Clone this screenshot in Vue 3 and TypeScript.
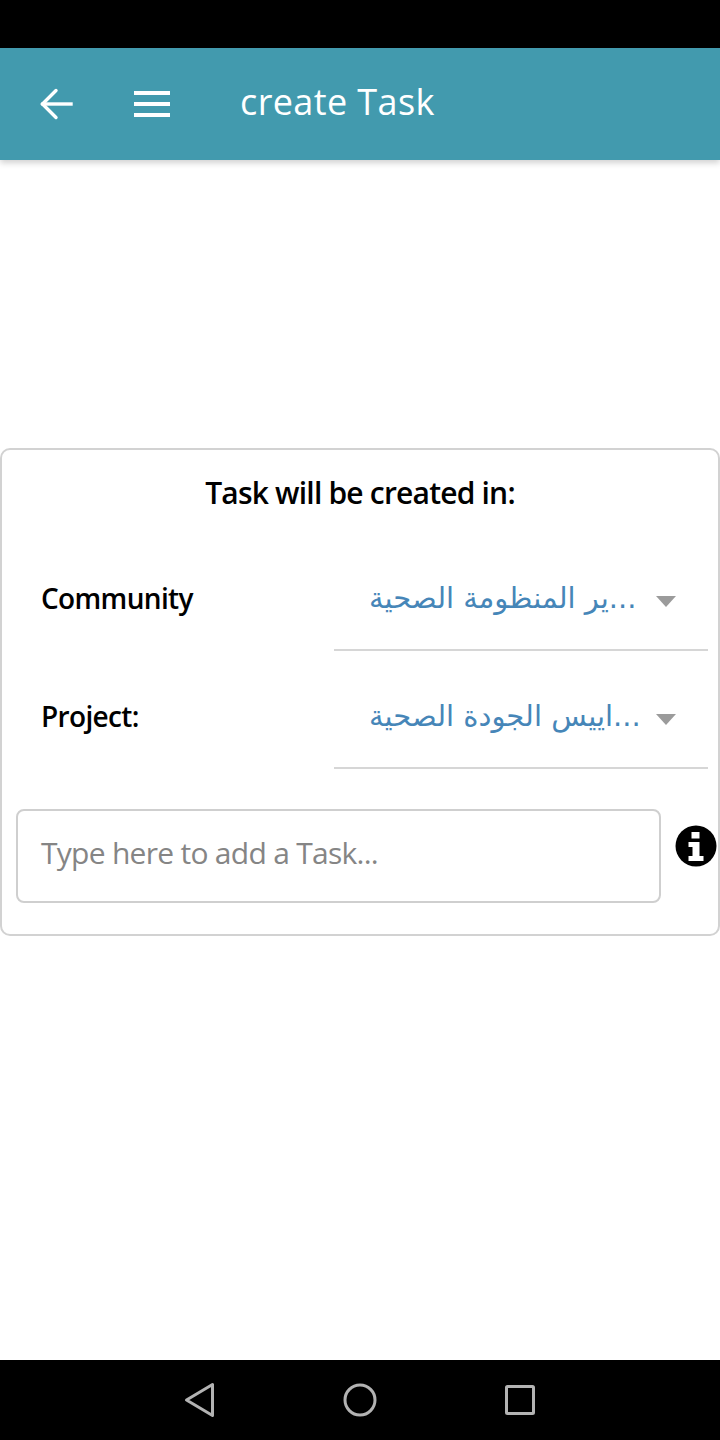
<script setup lang="ts">
const rows = [
  { label: 'Community', value: '...ير المنظومة الصحية', cls: 'community' },
  { label: 'Project:', value: '...اييس الجودة الصحية', cls: 'project' },
]
</script>

<template>
  <div class="screen">
    <div class="status"></div>
    <header class="bar">
      <svg class="back" width="36" height="36" viewBox="0 0 36 36" fill="none" stroke="#fff" stroke-width="3.4" stroke-linecap="square">
        <path d="M33 18H5" />
        <path d="M18 4.5 4.5 18 18 31.5" stroke-linecap="round" />
      </svg>
      <div class="menu"><i></i><i></i><i></i></div>
      <h1>create Task</h1>
    </header>
    <main class="main">
      <section class="card">
        <h2>Task will be created in:</h2>
        <div v-for="r in rows" :key="r.label" class="row" :class="r.cls">
          <span class="label">{{ r.label }}</span>
          <div class="select">
            <span class="value" dir="rtl">{{ r.value }}</span>
            <span class="caret"></span>
          </div>
        </div>
        <div class="input-row">
          <div class="input">Type here to add a Task...</div>
          <svg class="info" width="42" height="42" viewBox="0 0 42 42">
            <ellipse cx="21" cy="21" rx="20.5" ry="20.5" fill="#000" />
            <rect x="16.5" y="7" width="8" height="6.5" fill="#fff" />
            <path d="M13.5 17h11v14h4v5h-15v-5h4v-9h-4z" fill="#fff" />
          </svg>
        </div>
      </section>
    </main>
    <nav class="nav">
      <svg width="32" height="36" viewBox="0 0 32 36" fill="none" stroke="#b3b3b3" stroke-width="3" stroke-linejoin="round">
        <path d="M28.5 2.5v31L2.5 18z" />
      </svg>
      <svg width="34" height="34" viewBox="0 0 34 34" fill="none" stroke="#b3b3b3" stroke-width="3">
        <circle cx="17" cy="17" r="15" />
      </svg>
      <svg width="30" height="30" viewBox="0 0 30 30" fill="none" stroke="#b3b3b3" stroke-width="3" stroke-linejoin="round">
        <rect x="1.5" y="1.5" width="27" height="27" rx="1" />
      </svg>
    </nav>
  </div>
</template>

<style>
html, body { margin: 0; background: #fff; }
</style>

<style scoped>
.screen {
  width: 720px;
  height: 1440px;
  display: flex;
  flex-direction: column;
  background: #fff;
  font-family: "Open Sans", "DejaVu Sans", sans-serif;
  overflow: hidden;
}
.status { height: 48px; background: #000; flex: none; }
.bar {
  height: 112px;
  flex: none;
  display: flex;
  align-items: center;
  background: #429aae;
  box-shadow: 0 3px 6px rgba(0, 0, 0, 0.18);
  color: #fff;
  position: relative;
}
.back { margin-left: 38px; flex: none; }
.menu {
  margin-left: 60px;
  width: 36px;
  height: 26px;
  display: flex;
  flex-direction: column;
  justify-content: space-between;
  flex: none;
}
.menu i { display: block; height: 4px; background: #fff; }
.bar h1 {
  margin: -4px 0 0 70px;
  font-size: 36px;
  font-weight: 400;
  letter-spacing: 0.4px;
  line-height: 48px;
  white-space: nowrap;
}
.main { flex: 1; padding-top: 288px; }
.card {
  box-sizing: border-box;
  height: 488px;
  border: 2px solid #d2d2d2;
  border-radius: 10px;
  position: relative;
}
.card h2 {
  margin: 0;
  padding-top: 22px;
  height: 42px;
  line-height: 42px;
  text-align: center;
  font-size: 30px;
  font-weight: 600;
  letter-spacing: -0.8px;
  color: #000;
}
.row { display: flex; height: 118px; }
.community { margin-top: 19px; }
.label {
  margin: 45px 0 0 39px;
  width: 293px;
  height: 40px;
  flex: none;
  font-size: 28px;
  line-height: 40px;
  font-weight: 600;
  letter-spacing: -0.65px;
  color: #000;
}
.select {
  width: 374px;
  height: 118px;
  box-sizing: border-box;
  border-bottom: 2px solid #d6d6d6;
  display: flex;
  align-items: flex-start;
  justify-content: space-between;
  padding: 45px 32px 0 35px;
}
.value {
  font-family: "DejaVu Sans", sans-serif;
  font-size: 29px;
  line-height: 40px;
  color: #4686b8;
  white-space: nowrap;
}
.caret {
  width: 0;
  height: 0;
  margin: 18px 0 0 0;
  border-left: 10px solid transparent;
  border-right: 10px solid transparent;
  border-top: 11px solid #9b9b9b;
  flex: none;
}
.input-row {
  display: flex;
  margin-top: 40px;
  padding-left: 14px;
  align-items: flex-start;
}
.input {
  box-sizing: border-box;
  width: 645px;
  height: 94px;
  border: 2px solid #cfcfcf;
  border-radius: 8px;
  padding: 0 0 8px 23px;
  display: flex;
  align-items: center;
  font-size: 30px;
  letter-spacing: -0.72px;
  color: #858585;
  flex: none;
}
.info { margin: 16px 0 0 14px; flex: none; }
.nav {
  height: 80px;
  flex: none;
  background: #000;
  display: grid;
  grid-template-columns: 160px 160px 160px;
  justify-content: center;
  justify-items: center;
  align-items: center;
}
</style>
